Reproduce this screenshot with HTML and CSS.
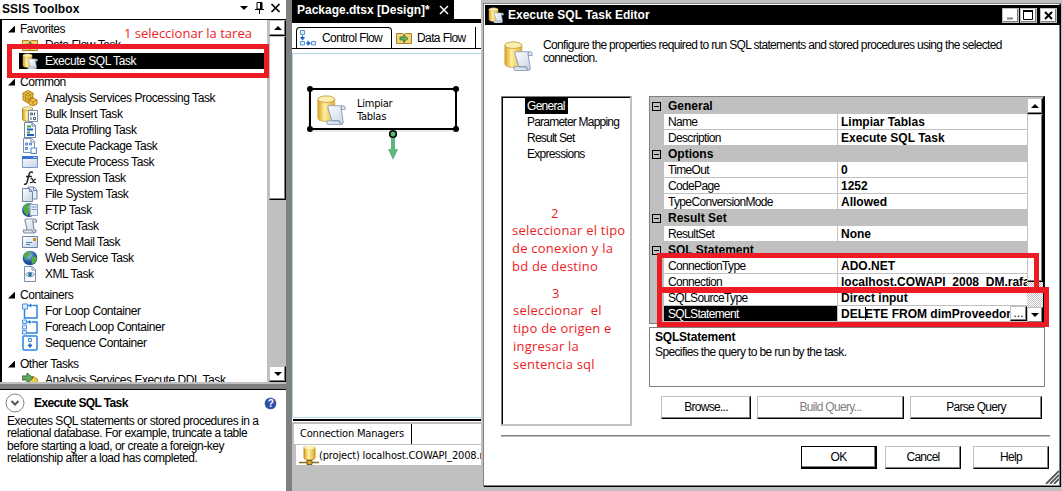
FILE: index.html
```html
<!DOCTYPE html>
<html lang="es">
<head>
<meta charset="utf-8">
<title>Execute SQL Task Editor</title>
<link rel="stylesheet" href="styles.css">
</head>
<body>
<svg class="defs" aria-hidden="true">
  <defs>
    <linearGradient id="gold"><stop offset="0" stop-color="#d9a020"/><stop offset=".4" stop-color="#fff0a0"/><stop offset="1" stop-color="#d8ab35"/></linearGradient>
    <linearGradient id="paper" x2="1" y2="1"><stop offset="0" stop-color="#fff"/><stop offset="1" stop-color="#c4d2e4"/></linearGradient>
    <radialGradient id="globe" cx=".4" cy=".3"><stop offset="0" stop-color="#9ccdf5"/><stop offset="1" stop-color="#1c4f9c"/></radialGradient>
  </defs>
  <symbol id="sql" viewBox="0 0 32 32">
    <path d="M2 5v20c0 5 18 5 18 0V5z" fill="url(#gold)" stroke="#d0ab4c"/>
    <ellipse cx="11" cy="5" rx="9" ry="3.5" fill="#fbeeb0" stroke="#c9a548"/>
    <path d="M14 12h14q3.500 0 3 4h-4l2 13q0 3-3 3H13q-2-1-1-4h5l-4-13q-1-3 1-3z" fill="url(#paper)" stroke="#9aa8bd" stroke-width="1.200"/>
    <path d="M27 16q-1-3 1-4M17 28h8q0 3 2 3" fill="none" stroke="#71839e"/>
  </symbol>
  <symbol id="flow" viewBox="0 0 16 16"><path d="M.5 3.500h6q1.500 0 1.500 2v8H.5zM15.500 3.500h-6Q8 3.500 8 5.500v8h7.500z" fill="#f3d375" stroke="#a98125"/><path d="M4 7h4V5l4 3.500L8 12v-2H4z" fill="#64b35b" stroke="#2f6d35" stroke-width=".7"/></symbol>
  <symbol id="cubes" viewBox="0 0 16 16"><path d="M1 3l5-2.500 5 2.500v7l-5 3-5-3z" fill="#ecc442" stroke="#b28515"/><path d="M1 3l5 3 5-3M6 6v7M3.500 2l5 3v7M8.500 2l-5 3v7M1 6.500l5 3 5-3" fill="none" stroke="#a97c16" stroke-width=".7"/><path d="M7 10l4-2 4 2v4l-4 2-4-2z" fill="#f4c142" stroke="#b07913"/><path d="M7 10l4 2 4-2M11 12v4" fill="none" stroke="#b07913" stroke-width=".8"/></symbol>
  <symbol id="bulk" viewBox="0 0 16 16"><path d="M.5 2v11c0 3 10 3 10 0V2z" fill="url(#gold)" stroke="#b78c28"/><ellipse cx="5.500" cy="2.500" rx="5" ry="1.800" fill="#fbeeb0" stroke="#b78c28" stroke-width=".6"/><path d="M6.500 4.500h9v11h-9z" fill="#fff" stroke="#7890ae"/><path d="M8.500 7h2v2h-2zM12.500 6.500v3M9 11v3M11.500 11.500h2v2h-2z" fill="none" stroke="#46597b"/></symbol>
  <symbol id="profile" viewBox="0 0 16 16"><path d="M2.500.5h8l3 3v12h-11z" fill="#f7faff" stroke="#7187a6"/><path d="M10 .5v3.500h3.500" fill="#cdd9e8" stroke="#7187a6"/><path d="M5 4.500h4M5 10.500h3" stroke="#42a642" stroke-width="2"/><path d="M5 7.500h6M5 13h7" stroke="#2460b4" stroke-width="2"/></symbol>
  <symbol id="pkg" viewBox="0 0 16 16"><path d="M1.500.5h8l3 3v11h-11z" fill="#fbfdff" stroke="#7b90ae"/><path d="M9 .5v3.500h3.500" fill="none" stroke="#7b90ae"/><path d="M3.500 5h2v2h-2zM7.500 5h2v2h-2zM3.500 9.500h2v2h-2z" fill="#dbe9fb" stroke="#4e82c6"/><path d="M9 10h5.500v5.500H9z" fill="#fff" stroke="#4e82c6"/></symbol>
  <symbol id="proc" viewBox="0 0 16 16"><path d="M.5 2.500h15v11H.5z" fill="url(#paper)" stroke="#7898c8"/><path d="M0 2h16v3H0z" fill="#3d74d0"/><path d="M11 3.500h4" stroke="#b9d3fa"/></symbol>
  <symbol id="fx" viewBox="0 0 16 16"><path d="M11 2.500q-3-1.500-4 2L5 12.500Q4 15 2 14M4 6.500h6" fill="none" stroke="#222" stroke-width="1.500"/><path d="M8.500 9q2-1 2.500 1.500t3 2M14 9q-1.500 0-2.500 2T8 12.500" fill="none" stroke="#222" stroke-width="1.200"/></symbol>
  <symbol id="files" viewBox="0 0 16 16"><path d="M6 1h6l3 3v9H6z" fill="#e3ebf5" stroke="#6f86a6"/><path d="M.5 2.500h7l3 3v10H.5z" fill="url(#paper)" stroke="#6f86a6"/><path d="M7.500 2.500v3h3M11.500 1v3.500H15" fill="none" stroke="#6f86a6"/></symbol>
  <symbol id="ftp" viewBox="0 0 16 16"><circle cx="7" cy="8" r="7" fill="url(#globe)"/><path d="M2 4q4-4 6-2L6 6l2 3-3 5Q1 11 2 4" fill="#4dac3d"/><path d="M8 2.500h7.500v11H8z" fill="#e8eff7" stroke="#8fa2bd"/><path d="M9.500 5h5M9.500 7.500h5" stroke="#6e94cb"/></symbol>
  <symbol id="script" viewBox="0 0 16 16"><path d="M4 1h9q2 .5 1.500 3H11l1 8h2q0 3-2 3H3q-2-.5-1.500-3H5L3.500 4Q2 2 4 1z" fill="url(#paper)" stroke="#8290a2" stroke-width="1.200"/><path d="M11 4q-1-2 1-3M5 12h5q0 2 2 3" fill="none" stroke="#8290a2"/></symbol>
  <symbol id="mail" viewBox="0 0 16 16"><path d="M.5 2.500h15v11H.5z" fill="url(#paper)" stroke="#6d87aa"/><path d="M11 4h3v3h-3z" fill="#d18b16"/><path d="M4 8.500h6M4 10.500h4" stroke="#5c7fb2"/></symbol>
  <symbol id="web" viewBox="0 0 16 16"><circle cx="8" cy="8" r="7.300" fill="url(#globe)"/><path d="M2 5q4-5 7-3L8 5 5 7l-2 3zM9 8l4-2 2 2-2 5-3 1z" fill="#55ac3f"/></symbol>
  <symbol id="xml" viewBox="0 0 16 16"><path d="M2.500.5h8l3 3v12h-11z" fill="#f7faff" stroke="#7d90aa"/><path d="M10 .5v3.500h3.500" fill="none" stroke="#7d90aa"/><path d="M3.500 8.500Q8 4 12.500 8.500 8 13 3.500 8.500z" fill="#fff" stroke="#6f87a6"/><circle cx="8" cy="8.500" r="2" fill="#2979a3"/></symbol>
  <symbol id="forloop" viewBox="0 0 16 16"><path d="M6 2.500h2M11 2.500h4V15H2.500V6" fill="none" stroke="#2b84e4" stroke-width="1.500"/><path d="M8 .5l3 2-3 2z" fill="#2b84e4"/><path d="M.5 1h5v5h-5z" fill="#dcecff" stroke="#4a94e0"/></symbol>
  <symbol id="foreach" viewBox="0 0 16 16"><path d="M5 3h3M10 3h5v11H5" fill="none" stroke="#2b84e4" stroke-width="1.500"/><path d="M7 1l3 2-3 2z" fill="#2b84e4"/><path d="M.5 1h4v3.500h-4zM.5 6h4v4h-4zM.5 11.500h4V15h-4z" fill="#dcecff" stroke="#4a94e0"/></symbol>
  <symbol id="seq" viewBox="0 0 16 16"><rect x="1" y="1" width="14" height="14" rx="1" fill="#fff" stroke="#2b84e4" stroke-width="1.500"/><path d="M6.500 3.500h3v3h-3z" fill="#cfe3fb" stroke="#4a94e0"/><path d="M8 8v2M6 10h4L8 12.500z" fill="#2267bd" stroke="#2267bd"/></symbol>
  <symbol id="ddl" viewBox="0 0 16 16"><path d="M7 8l4-4 5 4v8H7z" fill="#f0cd42" stroke="#a67e1b"/><path d="M0 4h5V1l6 5-6 5V8H0z" fill="#66a965" stroke="#376e3b"/></symbol>
  <symbol id="cflow" viewBox="0 0 16 16"><path d="M.5.5h4v4h-4zM.5 11.500h4v3.500h-4zM11.500 11.500h4V15h-4z" fill="#e1eeff" stroke="#5995db"/><path d="M2.500 5.500v2M1 7.500h3L2.500 9.500zM6 13.200h2M8 11.700v3l2-1.500z" fill="#1f66bd" stroke="#1f66bd" stroke-width="1.200"/></symbol>
  <symbol id="conn" viewBox="0 0 20 20"><path d="M5 2v11c0 2.500 11 2.500 11 0V2z" fill="url(#gold)" stroke="#c79118"/><ellipse cx="10.500" cy="2.500" rx="5.500" ry="1.800" fill="#fff0b5"/><path d="M0 17.500h20M10.500 15v5" stroke="#8b6b28" stroke-width="1.500"/><path d="M8 15.500h5v4H8z" fill="#d3a52e" stroke="#7b5c19"/></symbol>
</svg>

<div class="screen">
  <aside class="toolbox">
    <header class="toolbox-head"><b>SSIS Toolbox</b>
      <svg width="42" height="14" viewBox="0 0 42 14"><path d="M0 5h8L4 9z"/><path d="M17 1.500h5V8h-5zM15 8.500h9M19.500 8v5" fill="none" stroke="#000"/><path d="M21 1v7" stroke="#000" stroke-width="2"/><path d="M31.500 3l8 8M39.500 3l-8 8" stroke="#000" stroke-width="1.700"/></svg>
    </header>
    <div class="list-frame">
      <div class="tasks">
        <div class="group"><i class="tri"></i>Favorites</div>
        <div class="task"><svg><use href="#flow"/></svg>Data Flow Task</div>
        <div class="task active"><svg><use href="#sql"/></svg>Execute SQL Task</div>
        <div class="group"><i class="tri"></i>Common</div>
        <div class="task"><svg><use href="#cubes"/></svg>Analysis Services Processing Task</div>
        <div class="task"><svg><use href="#bulk"/></svg>Bulk Insert Task</div>
        <div class="task"><svg><use href="#profile"/></svg>Data Profiling Task</div>
        <div class="task"><svg><use href="#pkg"/></svg>Execute Package Task</div>
        <div class="task"><svg><use href="#proc"/></svg>Execute Process Task</div>
        <div class="task"><svg><use href="#fx"/></svg>Expression Task</div>
        <div class="task"><svg><use href="#files"/></svg>File System Task</div>
        <div class="task"><svg><use href="#ftp"/></svg>FTP Task</div>
        <div class="task"><svg><use href="#script"/></svg>Script Task</div>
        <div class="task"><svg><use href="#mail"/></svg>Send Mail Task</div>
        <div class="task"><svg><use href="#web"/></svg>Web Service Task</div>
        <div class="task"><svg><use href="#xml"/></svg>XML Task</div>
        <div class="group"><i class="tri"></i>Containers</div>
        <div class="task"><svg><use href="#forloop"/></svg>For Loop Container</div>
        <div class="task"><svg><use href="#foreach"/></svg>Foreach Loop Container</div>
        <div class="task"><svg><use href="#seq"/></svg>Sequence Container</div>
        <div class="group"><i class="tri"></i>Other Tasks</div>
        <div class="task"><svg><use href="#ddl"/></svg>Analysis Services Execute DDL Task</div>
      </div>
      <div class="scroll"><div class="sbtn"><i class="up"></i></div><div class="thumb"></div><div class="sbtn last"><i class="down"></i></div></div>
    </div>
    <div class="splitter"></div>
    <section class="help">
      <div class="help-head">
        <svg width="20" height="20"><circle cx="10" cy="10" r="9" fill="#fff" stroke="#858585"/><path d="M6.500 8l3.500 3.500L13.500 8" fill="none" stroke="#555" stroke-width="2"/></svg>
        <b>Execute SQL Task</b>
        <span class="q">?</span>
      </div>
      <p>Executes SQL statements or stored procedures in a<br>relational database. For example, truncate a table<br>before starting a load, or create a foreign-key<br>relationship after a load has completed.</p>
    </section>
  </aside>

  <main class="designer">
    <div class="doc-tab"><b>Package.dtsx [Design]*</b><svg width="10" height="10"><path d="M1 1l8 8M9 1L1 9" stroke="#fff" stroke-width="1.500"/></svg></div>
    <div class="strip"></div>
    <nav class="views">
      <div class="view on"><svg><use href="#cflow"/></svg>Control Flow</div>
      <div class="view"><svg><use href="#flow"/></svg>Data Flow</div>
      <div class="view"></div>
    </nav>
    <div class="canvas">
      <svg class="node" width="170" height="80" viewBox="0 0 170 80">
        <rect x="5" y="6" width="149" height="43" rx="3" fill="#ddd" opacity=".6"/>
        <rect x="7" y="6" width="146" height="40" rx="2" fill="#fff" stroke="#000" stroke-width="2"/>
        <circle cx="7" cy="6" r="3"/><circle cx="153" cy="6" r="3"/><circle cx="7" cy="46" r="3"/><circle cx="153" cy="46" r="3"/>
        <path d="M90 54v16" stroke="#5cb77c" stroke-width="4"/><path d="M85 66h10l-5 11z" fill="#5cb77c"/>
        <circle cx="90" cy="51" r="3.300" fill="#5cb77c" stroke="#000" stroke-width="1.600"/>
        <use href="#sql" x="13" y="11" width="30" height="31"/>
      </svg>
      <div class="node-name">Limpiar<br>Tablas</div>
    </div>
    <div class="divider"></div>
    <section class="managers">
      <div class="mtab">Connection Managers</div>
      <div class="mrow"><svg width="20" height="20"><use href="#conn"/></svg><span>(project) localhost.COWAPI_2008.rafa</span></div>
    </section>
  </main>
</div>

<div class="dialog">
  <header class="title"><svg width="16" height="16"><use href="#sql"/></svg><b>Execute SQL Task Editor</b>
    <div class="wbtns"><span><svg width="15" height="13"><path d="M4 9.500h6" stroke="#808080" stroke-width="2"/></svg></span><span><svg width="15" height="13"><path d="M2.500 2v8.500h9V2z" fill="none" stroke="#000"/><path d="M2 2h10" stroke="#000" stroke-width="2"/></svg></span><span class="x"><svg width="15" height="13"><path d="M4 3l7 7M11 3l-7 7" stroke="#000" stroke-width="2"/></svg></span></div>
  </header>
  <div class="intro"><svg width="30" height="31"><use href="#sql"/></svg><p>Configure the properties required to run SQL statements and stored procedures using the selected<br>connection.</p></div>
  <div class="work">
    <ul class="pages"><li><span class="sel">General</span></li><li>Parameter Mapping</li><li>Result Set</li><li>Expressions</li></ul>
    <div class="right">
      <div class="grid">
        <div class="rows">
          <div class="cat"><i></i><b>General</b></div>
          <div class="row"><span>Name</span><b>Limpiar Tablas</b></div>
          <div class="row"><span>Description</span><b>Execute SQL Task</b></div>
          <div class="cat"><i></i><b>Options</b></div>
          <div class="row"><span>TimeOut</span><b>0</b></div>
          <div class="row"><span>CodePage</span><b>1252</b></div>
          <div class="row"><span>TypeConversionMode</span><b>Allowed</b></div>
          <div class="cat"><i></i><b>Result Set</b></div>
          <div class="row"><span>ResultSet</span><b>None</b></div>
          <div class="cat"><i></i><b>SQL Statement</b></div>
          <div class="row"><span>ConnectionType</span><b>ADO.NET</b></div>
          <div class="row"><span>Connection</span><b>localhost.COWAPI_2008_DM.rafa</b></div>
          <div class="row"><span>SQLSourceType</span><b>Direct input</b></div>
          <div class="row cur"><span>SQLStatement</span><b>DEL<i class="caret"></i>ETE FROM dimProveedor</b><em>...</em></div>
        </div>
        <div class="gscroll"><div class="sbtn"><i class="up"></i></div><div class="thumb"></div><div class="sbtn last"><i class="down"></i></div></div>
      </div>
      <div class="about"><b>SQLStatement</b><p>Specifies the query to be run by the task.</p></div>
      <div class="actions"><button class="btn browse">Browse...</button><button class="btn build">Build Query...</button><button class="btn parse">Parse Query</button></div>
    </div>
  </div>
  <div class="rule"></div>
  <footer class="foot"><button class="btn ok">OK</button><button class="btn">Cancel</button><button class="btn helpb">Help</button></footer>
  <svg class="grip" width="14" height="14"><path d="M1 14L14 1M5 14l9-9M9 14l5-5" stroke="#555" stroke-width="1.800"/></svg>
</div>

<div class="mark m1"></div>
<div class="mark m2"></div>
<div class="mark m3"></div>
<div class="note n1">1 seleccionar la tarea</div>
<div class="note n2"><div class="num">2</div>seleccionar el tipo<br>de conexion y la<br>bd de destino</div>
<div class="note n3"><div class="num">3</div>seleccionar&nbsp; el<br>tipo de origen e<br>ingresar la<br>sentencia sql</div>
</body>
</html>
```
FILE: styles.css
```css
* { box-sizing: border-box; }
body { margin: 0; width: 1062px; height: 491px; overflow: hidden; position: relative; background: #808080; color: #000; font: 12px/16px "Liberation Sans", Arial, sans-serif; letter-spacing: -.48px; white-space: nowrap; }
p, ul { margin: 0; padding: 0; list-style: none; }
.defs { position: absolute; width: 0; height: 0; }
b { letter-spacing: 0; }
svg { display: block; flex: none; }

.screen { display: flex; gap: 6px; height: 491px; }
.toolbox { width: 286px; background: #fff; display: flex; flex-direction: column; }
.toolbox-head { height: 19px; padding: 0 4px 0 2px; display: flex; justify-content: space-between; }
.toolbox-head b { line-height: 18px; letter-spacing: .08px; }
.toolbox-head svg { margin-top: 1px; }
.list-frame { height: 363px; display: flex; border: solid #000; border-width: 1px 0 0 2px; }
.tasks { flex: 1; overflow: hidden; padding-top: 1px; }
.group { height: 16px; padding-left: 6px; display: flex; align-items: center; gap: 5px; }
.task + .group { margin-top: 5px; }
.tri { width: 7px; height: 7px; background: #000; clip-path: polygon(100% 0, 100% 100%, 0 100%); }
.task { height: 16px; margin-left: 17px; padding-left: 3px; display: flex; align-items: center; gap: 7px; letter-spacing: -.44px; }
.task svg, .view svg { width: 16px; height: 16px; }
.active { background: #000; color: #fff; }
.scroll { width: 19px; background: #c0c0c0; padding-left: 2px; display: flex; flex-direction: column; }
.sbtn { height: 16px; flex: none; background: #fff; border: 1px solid #c0c0c0; border-right-color: #000; border-bottom-color: #000; box-shadow: inset -1px -1px #808080; display: flex; align-items: center; justify-content: center; }
.last { margin-top: auto; }
.up, .down { border: 4px solid transparent; border-top: 0; border-bottom: 4px solid #000; }
.down { border-bottom: 0; border-top: 4px solid #000; }
.thumb { height: 164px; background: #fff; border: 1px solid #c0c0c0; border-right-color: #000; border-bottom-color: #000; box-shadow: inset -1px -1px #808080; }
.splitter { height: 8px; background: #808080; border-top: 2px solid #c0c0c0; border-bottom: 1px solid #000; }
.help { padding: 3px 7px 0 5px; }
.help-head { display: flex; align-items: center; height: 20px; }
.help-head b { margin-left: 9px; letter-spacing: -.62px; }
.q { margin-left: auto; margin-right: 3px; width: 11px; height: 11px; border-radius: 50%; background: #2d50a8; box-shadow: 0 0 0 .5px #8090bc; color: #fff; font: bold 10px/11px "Liberation Sans", sans-serif; text-align: center; }
.help p { margin: 2px 0 0 2px; line-height: 12.300px; }

.designer { flex: 1; background: #fff; display: flex; flex-direction: column; }
.doc-tab { width: 162px; height: 19px; padding: 0 5px; background: #000; color: #fff; display: flex; align-items: center; justify-content: space-between; }
.strip { height: 4px; background: #000; }
.views { height: 26px; padding: 4px 0 0 4px; display: flex; border-bottom: 1px solid #000; letter-spacing: -.6px; }
.view { width: 83px; padding-left: 4px; display: flex; align-items: center; gap: 5px; }
.view.on { width: 96px; border: solid #000; border-width: 1px 1px 0; border-radius: 4px 4px 0 0; padding-left: 3px; gap: 6px; }
.view:last-child { border-left: 1px solid #000; }
.canvas { height: 365px; margin-top: 4px; border: solid #add8e6; border-width: 1px 0 1px 1px; position: relative; }
.node { position: absolute; left: 10px; top: 29px; }
.node-name { position: absolute; left: 64px; top: 43px; font: 11px/13px "DejaVu Sans Condensed", "DejaVu Sans", sans-serif; letter-spacing: -.25px; }
.divider { height: 3px; margin-top: 1px; border-top: 2px solid #000; margin-left: 1px; }
.managers { flex: 1; background: #c0c0c0; padding: 2px 0 0 2px; font: 11px/18px "DejaVu Sans Condensed", "DejaVu Sans", sans-serif; letter-spacing: -.2px; }
.mtab { height: 20px; background: linear-gradient(90deg, #fff 117px, #000 117px 118px, #fff 118px); padding: 1px 0 0 6px; }
.mrow { height: 20px; background: #fff; margin-top: 1px; margin-left: 2px; padding-left: 3px; display: flex; align-items: center; letter-spacing: -.16px; }
.mrow span { padding-top: 1px; }

.dialog { position: absolute; left: 481px; top: 0; width: 581px; height: 491px; background: #fff; border: solid #c0c0c0; border-width: 3px 1px 4px 2px; box-shadow: inset 1px 1px #808080, inset -1px -1px #000, inset -2px -2px #808080; padding: 2px 2px 0; }
.title { height: 20px; margin-right: -1px; background: #000; color: #fff; display: flex; align-items: center; padding: 0 3px; }
.title svg { margin-right: 4px; }
.wbtns { display: flex; margin-left: auto; gap: 1px; }
.wbtns span { width: 17px; height: 15px; background: #fff; border: 1px solid #c0c0c0; box-shadow: inset -1px -1px #808080; }
.wbtns .x { margin-left: 2px; }
.intro { height: 71px; padding: 15px 0 0 18px; display: flex; gap: 10px; }
.intro p { line-height: 13px; margin-top: -1px; letter-spacing: -.665px; }
.work { display: flex; gap: 17px; padding-left: 16px; height: 330px; }
.pages { width: 131px; height: 330px; border: 1px solid #808080; border-right: 2px solid #c0c0c0; border-bottom: 2px solid #c0c0c0; box-shadow: inset 1px 1px #000; padding: 1px 0 0 25px; letter-spacing: -.8px; }
.pages li { height: 16px; letter-spacing: -.78px; }
.pages li:first-child, .pages li:last-child { letter-spacing: -.7px; }
.sel { display: inline-block; height: 16px; margin-left: -2px; padding: 0 3px 0 2px; background: #000; color: #fff; }
.grid { width: 396px; height: 228px; border: 1px solid #808080; border-right: 2px solid #000; padding-top: 1px; background: #c0c0c0; display: flex; }
.rows { width: 377px; }
.cat { height: 16px; padding-left: 2px; display: flex; align-items: center; gap: 7px; }
.cat i { width: 9px; height: 9px; border: 1px solid #000; background: linear-gradient(#000, #000) center / 5px 1px no-repeat; }
.row { height: 16px; margin-left: 14px; background: #fff; border-bottom: 1px solid #c0c0c0; display: flex; line-height: 16px; overflow: hidden; }
.row span { width: 174px; padding-left: 4px; border-right: 1px solid #c0c0c0; letter-spacing: -.66px; }
.row b { flex: 1; padding-left: 3px; overflow: hidden; }
.cur span { background: #000; color: #fff; }
.cur em { width: 17px; height: 15px; border: 1px solid #c0c0c0; border-right-color: #000; border-bottom-color: #000; box-shadow: inset -1px -1px #808080; font-style: normal; line-height: 12px; text-align: center; letter-spacing: 0; }
.caret { display: inline-block; width: 1px; height: 13px; margin-right: -1px; background: #000; vertical-align: -2px; }
.gscroll { width: 16px; display: flex; flex-direction: column; background: repeating-conic-gradient(#c0c0c0 0 25%, #fff 0 50%) 0 0 / 2px 2px; }
.gscroll .thumb { height: 168px; }
.about { height: 60px; margin-top: 3px; border: 1px solid #808080; padding: 1px 5px; }
.about b { letter-spacing: -.2px; }
.about p { letter-spacing: -.62px; margin-top: -1px; }
.actions { display: flex; gap: 6px; margin: 9px 0 0 12px; }
.btn { width: 76px; height: 23px; padding: 0 0 1px; background: #fff; border: 1px solid #c0c0c0; border-right-color: #000; border-bottom-color: #000; box-shadow: inset -1px -1px #808080; font: inherit; letter-spacing: -.7px; color: #000; }
.browse { width: 90px; }
.build { width: 147px; color: #808080; }
.parse { width: 132px; }
.rule { margin: 9px 9px 0 16px; height: 2px; border-top: 1px solid #808080; border-bottom: 1px solid #c0c0c0; }
.foot { display: flex; justify-content: flex-end; gap: 8px; padding: 9px 10px 0 0; }
.ok { border: 2px solid #000; border-left-width: 1px; border-top-width: 1px; }
.helpb { margin-left: 4px; }
.grip { position: absolute; right: 2px; bottom: 3px; }

.mark { position: absolute; border: 5px solid #ed1c24; }
.m1 { left: 7px; top: 44px; width: 262px; height: 34px; }
.m2 { left: 657px; top: 253px; width: 382px; height: 39px; }
.m3 { left: 657px; top: 287px; width: 392px; height: 40px; border-top-width: 6px; }
.note { position: absolute; color: #ed1c24; font: 13px/18px "Open Sans", "Noto Sans", sans-serif; letter-spacing: .22px; }
.n1 { left: 124px; top: 24px; letter-spacing: 0; }
.n2 { left: 512px; top: 205px; }
.n3 { left: 513px; top: 285px; }
.num { padding-left: 39px; line-height: 16px; }
```
